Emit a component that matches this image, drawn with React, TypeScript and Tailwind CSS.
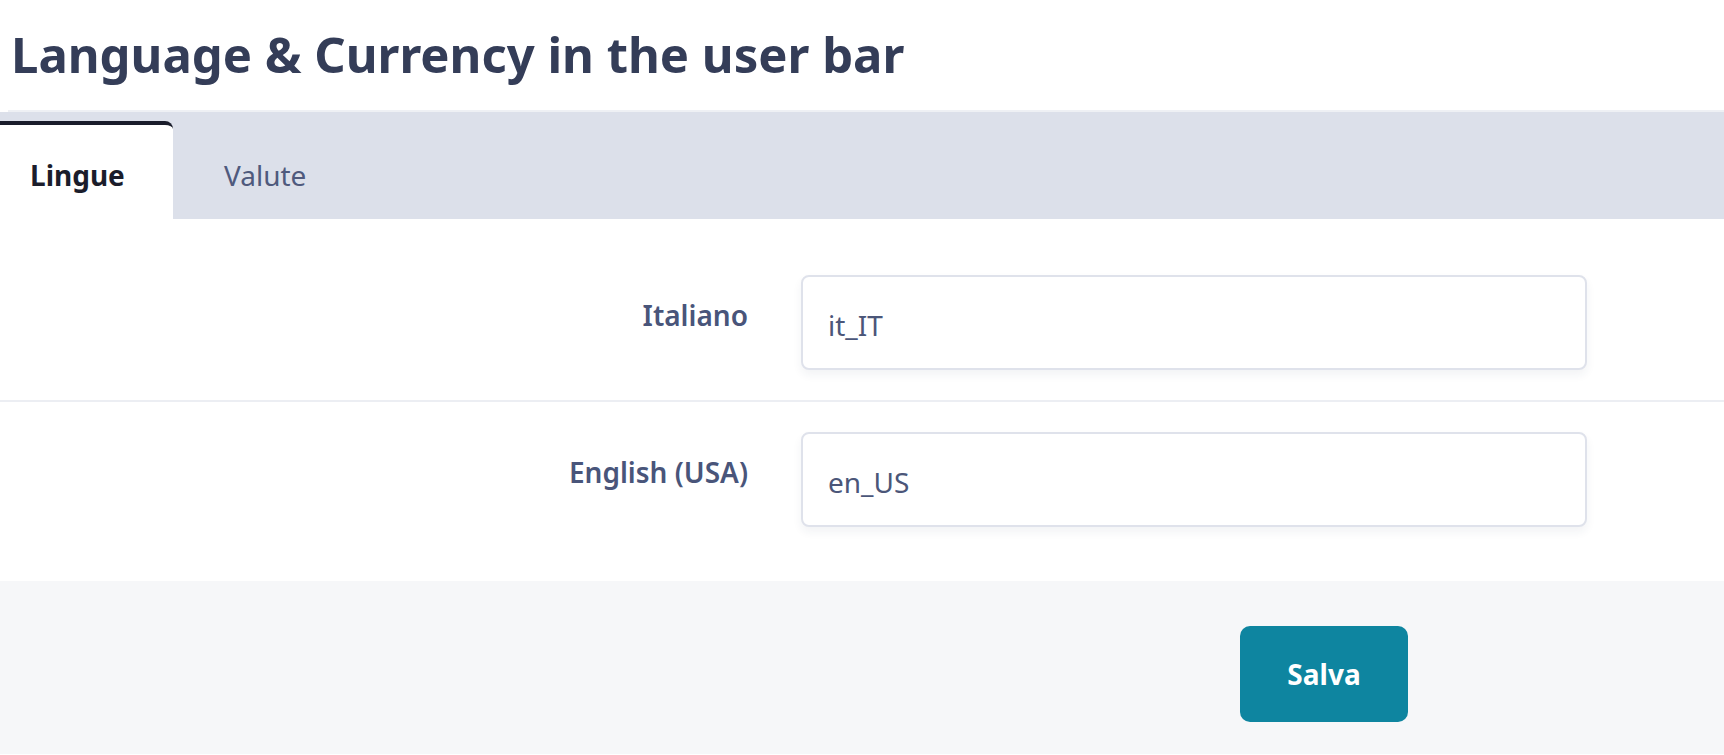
import React from "react";

const rows = [
  { label: "Italiano", value: "it_IT" },
  { label: "English (USA)", value: "en_US" },
];

const App = () => {
  return (
    <div className="min-h-[755px] bg-white font-['Noto_Sans',sans-serif]">
      <h1 className="h-[110px] pl-[11px] pt-[30px] text-[49px] font-bold leading-[49px] text-[#343d58]">
        Language &amp; Currency in the user bar
      </h1>
      <div className="ml-2 h-[2px] bg-[#eef0f4]" />
      <div className="flex h-[107px] items-end bg-[#dce0ea]">
        <button className="flex h-[98px] w-[173px] items-center rounded-tr-[8px] border-t-4 border-[#1a1d2b] bg-white pl-[30px] pt-[5px] text-[28px] font-bold text-[#1b1d2b]">
          Lingue
        </button>
        <button className="flex h-[98px] items-center px-[51px] pt-[9px] text-[28px] text-[#4f5a7d]">
          Valute
        </button>
      </div>
      <div className="pt-[26px] pb-[24px]">
        {rows.map((row, i) => (
          <div
            key={row.value}
            className={
              i === 0
                ? "flex py-[30px] border-b-2 border-[#eceef3]"
                : "flex py-[30px]"
            }
          >
            <div className="w-[748px] pt-[19px] text-right text-[28px] font-semibold leading-[42px] text-[#49557a]">
              {row.label}
            </div>
            <input
              readOnly
              defaultValue={row.value}
              className="ml-[53px] h-[95px] w-[786px] rounded-[8px] border-2 border-[#dfe2eb] bg-white px-[25px] pt-[4px] text-[28px] text-[#4b5679] shadow-[0_5px_10px_rgba(40,50,90,0.06)] outline-none"
            />
          </div>
        ))}
      </div>
      <div className="min-h-[173px] bg-[#f6f7f9] pl-[1240px] pt-[45px]">
        <button className="h-[96px] w-[168px] rounded-[10px] bg-[#0e85a0] text-[28px] font-bold text-white">
          Salva
        </button>
      </div>
    </div>
  );
};

export default App;
